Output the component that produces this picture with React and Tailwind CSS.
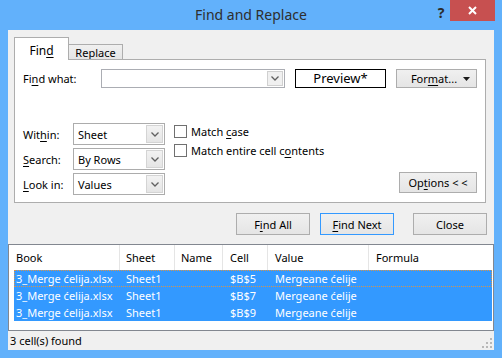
import React from 'react';

const font = { fontFamily: '"Segoe UI", "Noto Sans", "Open Sans", sans-serif' };

function U({ children }) {
  return <span className="underline underline-offset-2">{children}</span>;
}

function Chevron() {
  return (
    <svg width="8" height="5" viewBox="0 0 8 5" className="text-[#606060]">
      <path d="M0.5 0.5 L4 4 L7.5 0.5" fill="none" stroke="currentColor" strokeWidth="1.3" />
    </svg>
  );
}

function Combo({ value }) {
  return (
    <div className="w-[92px] h-[22px] border border-[#acacac] bg-white flex items-stretch">
      <div className="flex-1 pl-[4px] flex items-center">{value}</div>
      <div className="w-[17px] m-px border border-[#d4d4d4] bg-gradient-to-b from-[#f2f2f2] to-[#e5e5e5] flex items-center justify-center">
        <Chevron />
      </div>
    </div>
  );
}

function Btn({ children, className = '' }) {
  return (
    <div
      className={
        'h-[22px] w-[74px] border bg-gradient-to-b from-[#f0f0f0] to-[#e5e5e5] flex items-center justify-center ' +
        className
      }
    >
      {children}
    </div>
  );
}

function CheckRow({ children }) {
  return (
    <div className="flex items-center h-[13px]">
      <div className="w-[13px] h-[13px] border border-[#707070] bg-white" />
      <div className="ml-[4px]">{children}</div>
    </div>
  );
}

const rows = ['$B$5', '$B$7', '$B$9'];

export default function App() {
  return (
    <div style={font} className="w-[502px] h-[358px] bg-[#62b1fb] flex flex-col text-[11px] text-black leading-none whitespace-nowrap">
      {/* title bar */}
      <div className="h-[30px] flex items-start shrink-0">
        <div className="w-[70px]" />
        <div className="flex-1 text-center pt-[8px] text-[14px] text-[#2e2e2e]">Find and Replace</div>
        <div className="w-[70px] flex items-start">
          <div className="w-[18px] pt-[6px] text-[14px] font-bold text-[#2b2b2b] text-center">?</div>
          <div className="w-[45px] h-[21px] bg-[#c75050] flex items-center justify-center">
            <svg width="9" height="9" viewBox="0 0 9 9">
              <path d="M1 1 L8 8 M8 1 L1 8" stroke="white" strokeWidth="2" />
            </svg>
          </div>
        </div>
      </div>

      {/* client */}
      <div className="mx-[8px] mb-[8px] flex-1 bg-[#f0f0f0] flex flex-col">
        {/* tabs */}
        <div className="flex items-end h-[29px] pl-[6px] pt-[7px]">
          <div className="relative z-10 w-[55px] h-[23px] -mb-px border border-b-0 border-[#adadad] bg-white flex justify-center pt-[7px] text-[12px]">
            Fin<U>d</U>
          </div>
          <div className="w-[54px] h-[15px] border-t border-r border-[#adadad] bg-gradient-to-b from-[#f0f0f0] to-[#e5e5e5] flex justify-center pt-[2px]">
            Re<U>p</U>lace
          </div>
        </div>

        {/* panel */}
        <div className="ml-[6px] mr-[8px] h-[144px] border border-[#adadad] bg-white flex flex-col pt-[9px] px-[8px] pb-[7px]">
          <div className="flex items-center h-[19px]">
            <div className="w-[78px]">
              Fi<U>n</U>d what:
            </div>
            <div className="w-[184px] h-[19px] border border-[#abadb3] flex justify-end">
              <div className="w-[16px] m-px border border-[#d0d0d0] bg-[#f0f0f0] flex items-center justify-center">
                <Chevron />
              </div>
            </div>
            <div className="ml-[10px] w-[91px] h-[19px] border border-black flex items-center justify-center text-[13px]">
              Preview*
            </div>
            <div className="ml-[10px] w-[81px] h-[19px] border border-[#adadad] bg-gradient-to-b from-[#f0f0f0] to-[#e5e5e5] flex items-center">
              <div className="flex-1 text-center pl-[8px]">
                For<U>m</U>at...
              </div>
              <svg width="7" height="4" viewBox="0 0 7 4" className="mr-[6px]">
                <path d="M0 0 H7 L3.5 4 Z" fill="#1a1a1a" />
              </svg>
            </div>
          </div>

          <div className="mt-auto flex items-end">
            <div className="flex flex-col gap-[3px]">
              <div className="flex items-center">
                <div className="w-[50px]">
                  Wit<U>h</U>in:
                </div>
                <Combo value="Sheet" />
              </div>
              <div className="flex items-center">
                <div className="w-[50px]">
                  <U>S</U>earch:
                </div>
                <Combo value="By Rows" />
              </div>
              <div className="flex items-center">
                <div className="w-[50px]">
                  <U>L</U>ook in:
                </div>
                <Combo value="Values" />
              </div>
            </div>
            <div className="ml-[9px] self-start pt-[2px] flex flex-col gap-[6px]">
              <CheckRow>
                Match <U>c</U>ase
              </CheckRow>
              <CheckRow>
                Match entire cell c<U>o</U>ntents
              </CheckRow>
            </div>
            <div className="ml-auto mb-[2px] w-[78px] h-[21px] border border-[#adadad] bg-gradient-to-b from-[#f0f0f0] to-[#e5e5e5] flex items-center justify-center">
              Op<U>t</U>ions &lt; &lt;
            </div>
          </div>
        </div>

        {/* buttons */}
        <div className="mt-[10px] flex justify-end pr-[7px]">
          <Btn className="border-[#adadad]">
            F<U>i</U>nd All
          </Btn>
          <Btn className="ml-[10px] border-[#3399ff]">
            <U>F</U>ind Next
          </Btn>
          <Btn className="ml-[19px] border-[#adadad]">Close</Btn>
        </div>

        {/* results list */}
        <div className="mt-[9px] h-[87px] border border-[#828790] bg-white flex flex-col">
          <div className="ml-[5px] h-[25px] flex items-stretch">
            <div className="w-[106px] pl-[2px] border-r border-[#e5e5e5] flex items-center">Book</div>
            <div className="w-[55px] pl-[6px] border-r border-[#e5e5e5] flex items-center">Sheet</div>
            <div className="w-[48px] pl-[6px] border-r border-[#e5e5e5] flex items-center">Name</div>
            <div className="w-[45px] pl-[7px] border-r border-[#e5e5e5] flex items-center">Cell</div>
            <div className="w-[101px] pl-[7px] border-r border-[#e5e5e5] flex items-center">Value</div>
            <div className="flex-1 pl-[7px] flex items-center">Formula</div>
          </div>
          {rows.map((cell, i) => (
            <div
              key={cell}
              className={
                'ml-[5px] mr-px h-[17px] bg-[#3399ff] text-white flex items-center ' +
                (i === 0 ? 'outline-1 outline-dotted outline-[#d9944a] -outline-offset-1' : '')
              }
            >
              <div className="w-[106px] pl-[2px]">3_Merge ćelija.xlsx</div>
              <div className="w-[55px] pl-[6px]">Sheet1</div>
              <div className="w-[48px] pl-[6px]" />
              <div className="w-[45px] pl-[7px]">{cell}</div>
              <div className="w-[101px] pl-[7px]">Mergeane ćelije</div>
            </div>
          ))}
        </div>

        {/* status bar */}
        <div className="flex-1 flex items-center justify-between pl-[2px] pr-[2px]">
          <div>3 cell(s) found</div>
          <svg width="10" height="10" viewBox="0 0 10 10" className="self-end mb-[2px]">
            <g fill="#b8b8b8">
              <rect x="8" y="0" width="2" height="2" />
              <rect x="4" y="4" width="2" height="2" />
              <rect x="8" y="4" width="2" height="2" />
              <rect x="0" y="8" width="2" height="2" />
              <rect x="4" y="8" width="2" height="2" />
              <rect x="8" y="8" width="2" height="2" />
            </g>
          </svg>
        </div>
      </div>
    </div>
  );
}
